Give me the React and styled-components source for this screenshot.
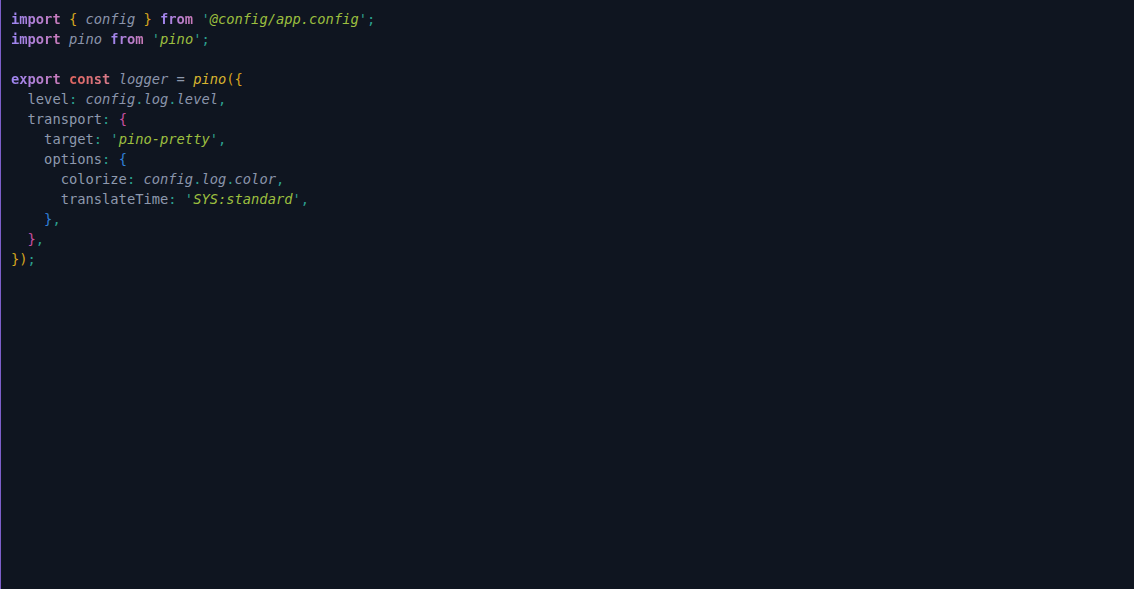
import React from "react"
import styled, { createGlobalStyle, css } from "styled-components"

const GlobalStyle = createGlobalStyle`
  html, body {
    margin: 0;
    padding: 0;
    background: #0f1520;
  }
  #root {
    min-height: 100vh;
  }
`

const Editor = styled.div`
  box-sizing: border-box;
  min-height: 100vh;
  border-left: 1px solid #7d5fc9;
  background: #0f1520;
  padding: 9px 0 0 10px;
  font-family: "DejaVu Sans Mono", "Liberation Mono", monospace;
  font-size: 13.75px;
  color: #8e99ad;
`

const Line = styled.div`
  height: 20px;
  line-height: 20px;
  white-space: pre;
  padding-left: ${({ indent }) => indent * 8.28}px;
`

const kinds = {
  kw: css`
    font-weight: bold;
    background: linear-gradient(90deg, #9d86f2, #c97ab8);
    -webkit-background-clip: text;
    background-clip: text;
    color: transparent;
  `,
  decl: css`
    font-weight: bold;
    background: linear-gradient(90deg, #e0645e, #d77a8a);
    -webkit-background-clip: text;
    background-clip: text;
    color: transparent;
  `,
  ident: css`
    font-style: italic;
    color: #8a94aa;
  `,
  prop: css`
    color: #8e99ad;
  `,
  str: css`
    font-style: italic;
    color: #9cbf3f;
  `,
  quote: css`
    font-style: italic;
    color: #2f9f8c;
  `,
  punct: css`
    color: #2ca08f;
  `,
  fn: css`
    font-style: italic;
    color: #d8b42f;
  `,
  yellow: css`
    color: #d6a41e;
  `,
  pink: css`
    color: #c94fa0;
  `,
  blue: css`
    color: #2f7fd8;
  `,
  op: css`
    color: #8e99ad;
  `,
}

const Tok = styled.span`
  ${({ kind }) => kinds[kind]}
`

const App = () => {
  return (
    <>
      <GlobalStyle />
      <Editor>
        <Line indent={0}>
          <Tok kind="kw">import</Tok> <Tok kind="yellow">{"{"}</Tok>{" "}
          <Tok kind="ident">config</Tok> <Tok kind="yellow">{"}"}</Tok>{" "}
          <Tok kind="kw">from</Tok> <Tok kind="quote">'</Tok>
          <Tok kind="str">@config/app.config</Tok>
          <Tok kind="quote">'</Tok>
          <Tok kind="punct">;</Tok>
        </Line>
        <Line indent={0}>
          <Tok kind="kw">import</Tok> <Tok kind="ident">pino</Tok>{" "}
          <Tok kind="kw">from</Tok> <Tok kind="quote">'</Tok>
          <Tok kind="str">pino</Tok>
          <Tok kind="quote">'</Tok>
          <Tok kind="punct">;</Tok>
        </Line>
        <Line indent={0}> </Line>
        <Line indent={0}>
          <Tok kind="kw">export</Tok> <Tok kind="decl">const</Tok>{" "}
          <Tok kind="ident">logger</Tok> <Tok kind="op">=</Tok>{" "}
          <Tok kind="fn">pino</Tok>
          <Tok kind="yellow">({"{"}</Tok>
        </Line>
        <Line indent={2}>
          <Tok kind="prop">level</Tok>
          <Tok kind="punct">:</Tok> <Tok kind="ident">config</Tok>
          <Tok kind="punct">.</Tok>
          <Tok kind="ident">log</Tok>
          <Tok kind="punct">.</Tok>
          <Tok kind="ident">level</Tok>
          <Tok kind="punct">,</Tok>
        </Line>
        <Line indent={2}>
          <Tok kind="prop">transport</Tok>
          <Tok kind="punct">:</Tok> <Tok kind="pink">{"{"}</Tok>
        </Line>
        <Line indent={4}>
          <Tok kind="prop">target</Tok>
          <Tok kind="punct">:</Tok> <Tok kind="quote">'</Tok>
          <Tok kind="str">pino-pretty</Tok>
          <Tok kind="quote">'</Tok>
          <Tok kind="punct">,</Tok>
        </Line>
        <Line indent={4}>
          <Tok kind="prop">options</Tok>
          <Tok kind="punct">:</Tok> <Tok kind="blue">{"{"}</Tok>
        </Line>
        <Line indent={6}>
          <Tok kind="prop">colorize</Tok>
          <Tok kind="punct">:</Tok> <Tok kind="ident">config</Tok>
          <Tok kind="punct">.</Tok>
          <Tok kind="ident">log</Tok>
          <Tok kind="punct">.</Tok>
          <Tok kind="ident">color</Tok>
          <Tok kind="punct">,</Tok>
        </Line>
        <Line indent={6}>
          <Tok kind="prop">translateTime</Tok>
          <Tok kind="punct">:</Tok> <Tok kind="quote">'</Tok>
          <Tok kind="str">SYS:standard</Tok>
          <Tok kind="quote">'</Tok>
          <Tok kind="punct">,</Tok>
        </Line>
        <Line indent={4}>
          <Tok kind="blue">{"}"}</Tok>
          <Tok kind="punct">,</Tok>
        </Line>
        <Line indent={2}>
          <Tok kind="pink">{"}"}</Tok>
          <Tok kind="punct">,</Tok>
        </Line>
        <Line indent={0}>
          <Tok kind="yellow">{"})"}</Tok>
          <Tok kind="punct">;</Tok>
        </Line>
      </Editor>
    </>
  )
}

export default App
